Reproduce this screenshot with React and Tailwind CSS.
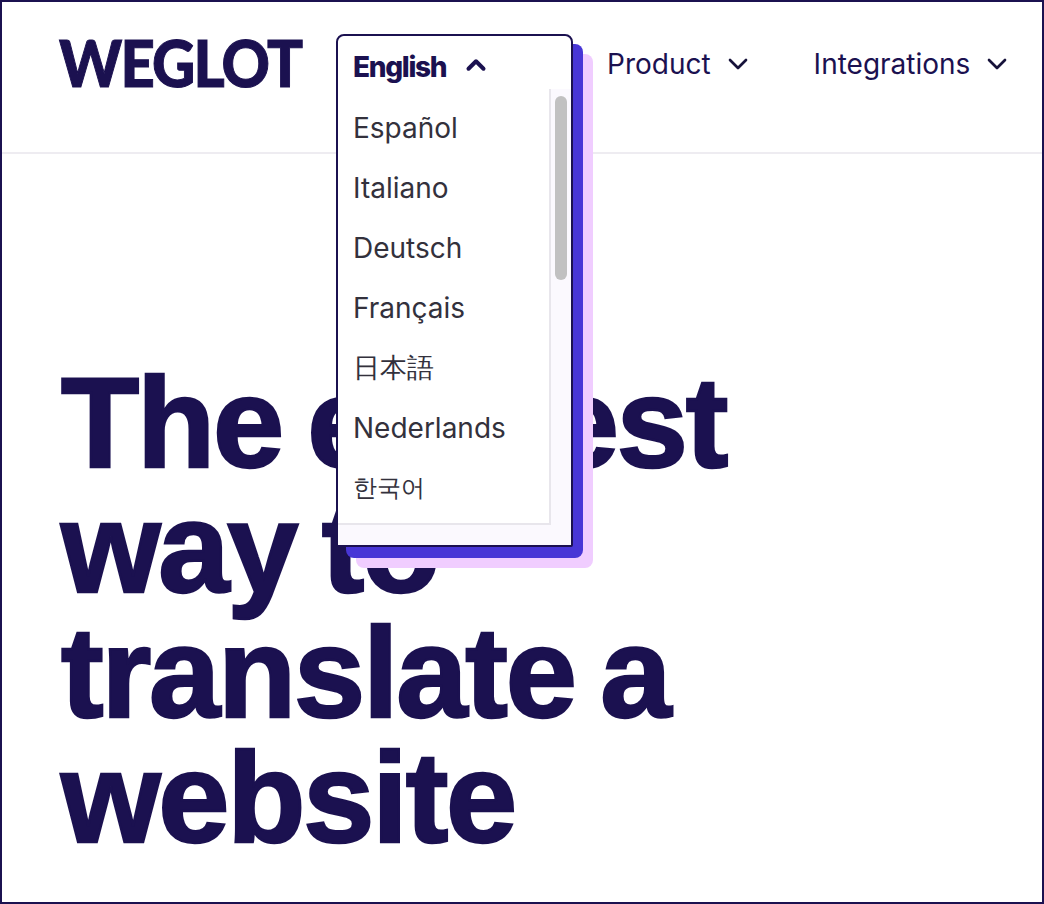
import React from 'react';
import {ChevronDown, ChevronUp} from 'lucide-react';

const languages = [
	{label: 'Español', size: 'text-[28px]'},
	{label: 'Italiano', size: 'text-[28px]'},
	{label: 'Deutsch', size: 'text-[28px]'},
	{label: 'Français', size: 'text-[28px]'},
	{label: '日本語', size: 'text-[27px]'},
	{label: 'Nederlands', size: 'text-[28px]'},
	{label: '한국어', size: 'text-[24px]'},
];

const NavItem = ({label}) => {
	return (
		<div className="flex items-center gap-[11px] text-[#1b1150] text-[28px] leading-none">
			<span>{label}</span>
			<ChevronDown size={32} strokeWidth={2} className="text-[#16123a]" />
		</div>
	);
}

const LanguageMenu = () => {
	return (
		<div className="relative w-[237px] h-[55px] shrink-0">
			<div className="absolute top-[20px] left-[20px] w-[237px] h-[514px] rounded-[8px] bg-[#f0cdff]"></div>
			<div className="absolute top-[10px] left-[10px] w-[237px] h-[514px] rounded-[8px] bg-[#4836d6]"></div>
			<div className="absolute top-0 left-0 w-[237px] h-[513px] flex flex-col bg-[#fbf9fe] border-2 border-[#1b1150] rounded-t-[8px] rounded-b-[2px]">
				<div className="h-[53px] shrink-0 flex items-center gap-[15px] pl-[15px] pt-[8px] bg-white rounded-t-[8px] text-[#1b1150] text-[28px] font-extrabold tracking-[-1.3px]">
					<span>English</span>
					<ChevronUp size={30} strokeWidth={3.2} className="-mt-[4px]" />
				</div>
				<div className="h-[436px] flex">
					<div className="w-[213px] bg-white border-r-2 border-b-2 border-[#e8e6ec] flex flex-col pt-[9px]">
						{languages.map((language, index) => {
							return <div key={index} className={`h-[60px] shrink-0 flex items-center pl-[15px] text-[#33313c] ${language.size}`}>{language.label}</div>
						})}
					</div>
					<div className="flex-1 pt-[7px] pl-[4px]">
						<div className="w-[12px] h-[184px] rounded-full bg-[#c1c1c1]"></div>
					</div>
				</div>
			</div>
		</div>
	);
}

const App = () => {
	return (
		<div className="h-[904px] overflow-hidden bg-white border-2 border-[#1b1150] font-['Inter',sans-serif]">
			<header className="h-[152px] flex items-start border-b-2 border-[#eeecf1] pl-[57px] pt-[32px]">
				<div className="w-[277px] h-[58px] shrink-0 flex items-center font-['Lato',sans-serif] font-black text-[#1b1150] text-[65px] tracking-[-2px] origin-left scale-x-[0.92] [-webkit-text-stroke:1px_#1b1150]">WEGLOT</div>
				<LanguageMenu />
				<div className="ml-[34px] mt-[14px]">
					<NavItem label="Product" />
				</div>
				<div className="ml-[60px] mt-[14px]">
					<NavItem label="Integrations" />
				</div>
			</header>
			<h1 className="pl-[59px] pt-[206px] w-[760px] font-['Liberation_Sans',sans-serif] text-[#1b1150] text-[128px] leading-[125px] font-bold tracking-[-2.2px] [word-spacing:-8px] [-webkit-text-stroke:2.5px_#1b1150]">
				The easiest way to translate a website
			</h1>
		</div>
	);
}

export default App;
